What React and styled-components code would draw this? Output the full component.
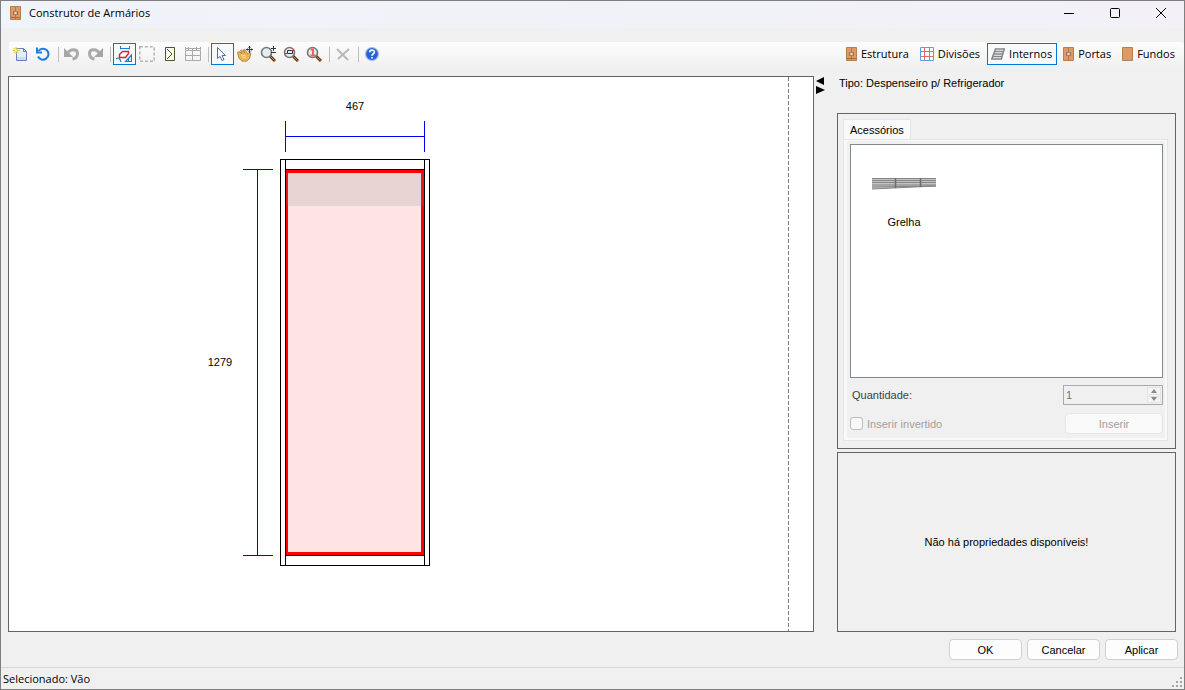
import React, { useState } from "react";
import styled, { createGlobalStyle } from "styled-components";

const GlobalStyle = createGlobalStyle`
* {
    box-sizing: border-box;
}
body {
    margin: 0;
    background: #f0f0f0;
    color: #000;
    font-family: "Liberation Sans", Arial, sans-serif;
    font-size: 11px;
}
button, input {
    font: inherit;
    color: inherit;
    margin: 0;
    padding: 0;
}
svg {
    display: block;
    flex-shrink: 0;
}
`;

const Window = styled.div`
min-height: 100vh;
display: flex;
flex-direction: column;
background: #f0f0f0;
border: 1px solid #7f7f7f;
`

const TitleBar = styled.header`
height: 27px;
display: flex;
align-items: center;
padding: 0 0 4px 9px;
background: linear-gradient(90deg, #eff4f9, #f3f0f8);
h1 {
    flex: 1;
    margin: 0 0 0 8px;
    font: 400 11px/16px "Open Sans", "Noto Sans", sans-serif;
}
`

const CaptionButton = styled.button`
width: 46px;
height: 22px;
display: flex;
align-items: center;
justify-content: center;
border: 0;
background: none;
`

const ToolStrip = styled.div`
height: 24px;
margin: 14px 0 0 8px;
display: flex;
align-items: center;
justify-content: space-between;
background: linear-gradient(#fdfdfd, #f1f1f1);
border-radius: 0 3px 3px 0;
`

const Tools = styled.div`
display: flex;
align-items: center;
`

const ToolButton = styled.button`
width: 23px;
height: 22px;
display: flex;
align-items: center;
justify-content: center;
padding-right: 1px;
background: ${p => p.$active ? "#f7fafd" : "none"};
border: 1px solid ${p => p.$active ? "#0078d7" : "transparent"};
`

const Separator = styled.span`
width: 6px;
height: 15px;
display: flex;
justify-content: center;
&:before {
    content: '';
    width: 1px;
    background: #bdbdbd;
}
`

const Sections = styled.nav`
width: 342px;
display: flex;
gap: 2px;
`

const SectionButton = styled.button`
height: 22px;
display: flex;
align-items: center;
gap: 4px;
padding: 0 4px 0 3px;
white-space: nowrap;
font: 400 11px/16px "Open Sans", "Noto Sans", sans-serif;
background: ${p => p.$active ? "#f7fafd" : "none"};
border: 1px solid ${p => p.$active ? "#0078d7" : "transparent"};
`

const Body = styled.main`
flex: 1;
display: flex;
padding: 10px 8px 0 7px;
`

const Canvas = styled.div`
flex: 1;
min-width: 440px;
display: flex;
justify-content: space-between;
background: #fff;
border: 1px solid #646464;
text {
    font-size: 11px;
    text-anchor: middle;
}
`

const PageLimit = styled.div`
width: 25px;
background: repeating-linear-gradient(#808080 0 4px, #fff 4px 6px) left / 1px 100% no-repeat;
`

const Splitter = styled.div`
width: 23px;
padding: 1px 0 0 2px;
`

const Side = styled.aside`
width: 339px;
display: flex;
flex-direction: column;
`

const TypeLabel = styled.p`
margin: 0 0 23px;
padding-left: 2px;
line-height: 14px;
`

const Panel = styled.section`
padding: 5px 7px 7px 5px;
border: 1px solid #646464;
`

const Tab = styled.button`
height: 20px;
display: block;
padding: 0 6px;
background: #f9f9f9;
border: 1px solid #e5e5e5;
border-bottom: 0;
`

const TabPage = styled.div`
padding: 1px;
border: 1px solid #e5e5e5;
background: #f9f9f9;
`

const Form = styled.div`
display: flex;
flex-direction: column;
padding: 3px 2px 4px 3px;
margin: 0 1px 1px 2px;
background: #f0f0f0;
`

const AccessoryList = styled.ul`
height: 234px;
margin: 0;
padding: 32px 21px;
list-style: none;
background: #fff;
border: 1px solid #828790;
`

const Accessory = styled.li`
width: 64px;
display: flex;
flex-direction: column;
align-items: center;
gap: 24px;
line-height: 14px;
`

const Field = styled.div`
display: flex;
align-items: center;
justify-content: space-between;
margin-top: ${p => p.$gap}px;
padding-left: ${p => p.$indent || 0}px;
color: ${p => p.$muted ? "#a0a0a0" : "#404040"};
`

const Spinner = styled.span`
width: 100px;
height: 20px;
display: flex;
padding: 1px;
border: 1px solid #a9a9ad;
color: #7c6d80;
input {
    flex: 1;
    min-width: 0;
    border: 0;
    padding-left: 1px;
    background: none;
    color: inherit;
    appearance: textfield;
}
input::-webkit-inner-spin-button {
    display: none;
}
`

const Steps = styled.span`
width: 14px;
display: flex;
flex-direction: column;
gap: 1px;
button {
    flex: 1;
    display: flex;
    align-items: center;
    justify-content: center;
    border: 1px solid #e3e3e3;
    background: #f4f4f4;
}
`

const CheckLabel = styled.label`
display: flex;
align-items: center;
gap: 4px;
line-height: 14px;
input {
    width: 13px;
    height: 13px;
    appearance: none;
    background: #f8f8f8;
    border: 1px solid #bcbcbc;
    border-radius: 3px;
}
`

const Button = styled.button`
width: ${p => p.$wide ? 98 : 73}px;
height: 21px;
background: #fdfdfd;
border: 1px solid #d0d0d0;
border-radius: 4px;
&:disabled {
    color: #a0a0a0;
    background: #f9f9f9;
    border-color: #e6e6e6;
}
`

const Properties = styled.section`
flex: 1;
min-height: 100px;
margin-top: 3px;
display: flex;
align-items: center;
justify-content: center;
border: 1px solid #646464;
`

const Actions = styled.div`
display: flex;
justify-content: flex-end;
gap: 5px;
padding: 7px 6px;
`

const StatusBar = styled.footer`
height: 22px;
display: flex;
align-items: center;
justify-content: space-between;
padding-left: 2px;
border-top: 1px solid #d7d7d7;
font: 400 11px/16px "Open Sans", "Noto Sans", sans-serif;
`

const Grip = styled.svg`
align-self: flex-end;
`

const Icon = ({ children, w = 16 }) => (
    <svg width={w} height="16" viewBox={`0 0 ${w} 16`} fill="none" aria-hidden="true">{children}</svg>
);

const Cabinet = ({ doorsOnly }) => (
    <Icon w={11}>
        <path d="M.5 1.5h10v13H.5z" fill="#dc9a68" stroke="#b87f4d" />
        <path d="M5.5 2v12" stroke="#b87840" />
        <path d="M3 6h1.500v4H3zM6.500 6H8v4H6.500z" fill="#8a7467" />
        <path d="M4.500 7h2v2h-2z" fill="#f2ddcb" />
        {!doorsOnly && <path d="M1 12.5h9" stroke="#a86b38" />}
    </Icon>
);

const Divisions = () => (
    <Icon w={14}>
        <path d="M.5 1.5h13v13H.5z" fill="#fff" />
        <path d="M4.5 1v14M9.5 1v14M0 5.5h14M0 10.5h14" stroke="#e06a6a" />
        <path d="M.5 1.5h13v13H.5z" stroke="#5ba0dc" />
    </Icon>
);

const Shelves = () => (
    <Icon w={14}>
        <path d="M4.5 3H13.300l-3 10H.8zM3.700 5.500h9M2.900 8h9M1.900 10.500h9" stroke="#858585" strokeWidth="1.5" />
    </Icon>
);

const Back = () => (
    <Icon w={11}><path d="M.5 1.5h10v13H.5z" fill="#dc9a68" stroke="#b87f4d" /></Icon>
);

const NewFile = () => (
    <Icon>
        <path d="M4.5 2.5h7l3 3v9h-10z" fill="#e3eeff" stroke="#6683bd" />
        <path d="M5 11h9v3H5z" fill="#cadcfb" />
        <path d="M11.5 2.5v3h3z" fill="#fff" stroke="#6683bd" />
        <path d="M4 1v7M.5 4.5h7M1.5 2l5 5M6.5 2l-5 5" stroke="#eec935" />
        <path d="M3 3.500h2v2H3z" fill="#fff6b0" />
    </Icon>
);

const Reset = () => (
    <Icon>
        <path d="M3.500 5A5.500 5.500 0 1 1 3 10.500" stroke="#1780df" strokeWidth="2" />
        <path d="M2 1.500v5h5" stroke="#1780df" strokeWidth="2" />
    </Icon>
);

const Curve = ({ flip }) => (
    <Icon>
        <g transform={flip ? "translate(16 0) scale(-1 1)" : undefined}>
            <path d="M3.500 7.500C6 2.500 13.500 2.500 13.500 7.500c0 3-2 5-5 5.500" stroke="#aaa" strokeWidth="3" />
            <path d="M0 2v9h9z" fill="#a6a6a6" />
        </g>
    </Icon>
);

const Dimensions = () => (
    <Icon>
        <path d="M4.5 0v3.500M13.5 0v3.500M4.5 2.500h9" stroke="#1780d8" />
        <path d="M3.500 10.500v-2l3-3h6v2l-3 4h-6z" stroke="#e01f30" strokeWidth="1.400" />
        <path d="M0 13c2-2 4-1 5 3M9.500 15.500h6V9zM12.500 15.500v-3" stroke="#1780c0" strokeWidth="1.200" />
    </Icon>
);

const Marquee = () => (
    <Icon><path d="M.8.8h14.400v14.400H.8z" stroke="#b4b4b4" strokeWidth="1.500" strokeDasharray="3 2" /></Icon>
);

const DoorSide = () => (
    <Icon w={10}>
        <path d="M.5 1.5h9v13h-9z" stroke="#4b5525" fill="#f8f9ef" />
        <path d="M2 3l5 5-5 5" stroke="#4b5525" />
    </Icon>
);

const Table = () => (
    <Icon>
        <path d="M.5 4.5h15v10H.5zM0 9.5h16M7.5 2v13M0 2.5h16M.5 1v3M3.5 1v3M11.5 1v3M15.5 1v3" stroke="#aaa" />
    </Icon>
);

const Arrow = () => (
    <Icon>
        <path d="M3.5 1.500v11L6 10.300l2 4.200 2-1-2-4h3.500z" fill="#fff" stroke="#596c9a" />
    </Icon>
);

const Hand = () => (
    <Icon>
        <path d="M.5 6.500l1.500-1 3 2-1.500-3 1-.8 3 3-1-3 1.300-.5 3.200 5 1.500-1.500 1.500.5-1.500 5.500-3 2.500H5l-3-3z" fill="#e7b457" stroke="#a8762e" strokeWidth=".8" />
        <path d="M4 9l5 1M5 11l4 1" stroke="#ffe0a0" />
        <path d="M12.5 0v7M9 3.5h7M11.5 1.5h2M11.5 5.5h2M10.5 2.5v2M14.5 2.5v2" stroke="#35383c" />
    </Icon>
);

const Lens = ({ children }) => (
    <Icon>
        <path d="M10 10l5 5" stroke="#623b19" strokeWidth="3" />
        <path d="M10.500 10.500l4 4" stroke="#b98b51" />
        <circle cx="6.500" cy="6.500" r="5" fill="#e5edf3" stroke="#777" strokeWidth="1.600" />
        {children}
    </Icon>
);

const Delete = () => (
    <Icon><path d="M2 3l11 11M14 3L3 13" stroke="#b8b8b8" strokeWidth="2" /></Icon>
);

const Help = () => (
    <Icon>
        <circle cx="8" cy="8" r="6.500" fill="#2763d5" stroke="#aabfe6" strokeWidth="1.200" />
        <path d="M5.800 6.300c0-3 4.600-2.800 4.600-.3C10.400 7.800 8 7.700 8 9.800M8 11v1.500" stroke="#fff" strokeWidth="1.700" />
    </Icon>
);

const tools = [
    { name: "Novo", icon: <NewFile /> },
    { name: "Reiniciar", icon: <Reset /> },
    null,
    { name: "Desfazer", icon: <Curve /> },
    { name: "Refazer", icon: <Curve flip /> },
    null,
    { name: "Cotas", icon: <Dimensions />, active: true },
    { name: "Área", icon: <Marquee /> },
    { name: "Porta", icon: <DoorSide /> },
    { name: "Tabela", icon: <Table /> },
    null,
    { name: "Selecionar", icon: <Arrow />, active: true },
    { name: "Mover", icon: <Hand /> },
    { name: "Zoom", icon: <Lens><path d="M13.5 0v5M11 2.5h5M11 6.5h5" stroke="#333" /></Lens> },
    { name: "Zoom janela", icon: <Lens><path d="M4.5 4.5h5v3h-5z" stroke="#333" /><path d="M2 7.5h3M8 4.5h3" stroke="#e22" /></Lens> },
    { name: "Zoom real", icon: <Lens><path d="M4.500 3.500H7V10M4.500 9.500h5" stroke="#f36060" strokeWidth="2" /></Lens> },
    null,
    { name: "Excluir", icon: <Delete /> },
    null,
    { name: "Ajuda", icon: <Help /> },
];

const sections = [
    { name: "Estrutura", icon: <Cabinet /> },
    { name: "Divisões", icon: <Divisions /> },
    { name: "Internos", icon: <Shelves /> },
    { name: "Portas", icon: <Cabinet doorsOnly /> },
    { name: "Fundos", icon: <Back /> },
];

const Drawing = () => (
    <svg width="440" height="500" shapeRendering="crispEdges" fill="none">
        <text x="346" y="33" fill="#000">467</text>
        <text x="211" y="289" fill="#000">1279</text>
        <path d="M276.5 44v31M415.5 44v31M276.5 59.5h139M234 92.5h30M234 478.5h30M248.5 92.5v386" stroke="#0000f0" />
        <path d="M271.5 82.5h149v406h-149zM276.5 82.5v406M415.5 82.5v406M276.5 92.5h139M276.5 478.5h139" stroke="#000" />
        <path d="M277 93h138v385H277z" fill="#f00" />
        <path d="M279 96h133v379H279z" fill="#ffe4e4" />
        <path d="M277 96h138v33H277z" fill="#e01c22" />
        <path d="M279 96h133v33H279z" fill="#e8d4d2" />
    </svg>
);

const Grill = () => (
    <svg width="64" height="14" fill="none">
        <path d="M0 1h64v8L0 12z" fill="#c4c4c4" />
        <path d="M0 1.5h64M0 3.5h64M0 5.5h64M0 8h64M0 10l64-1M0 12l64-3" stroke="#858585" />
        <path d="M23.5 1v10M48.5 1v9" stroke="#6c6c6c" strokeWidth="1.500" />
    </svg>
);

const App = () => {
    const [section, setSection] = useState("Internos");

    return (
        <>
            <GlobalStyle />
            <Window>
                <TitleBar>
                    <Cabinet />
                    <h1>Construtor de Armários</h1>
                    <CaptionButton aria-label="Minimizar">
                        <svg width="10" height="10"><path d="M0 5.5h10" stroke="#000" /></svg>
                    </CaptionButton>
                    <CaptionButton aria-label="Maximizar">
                        <svg width="10" height="10"><rect x=".5" y=".5" width="9" height="9" rx="1" fill="none" stroke="#000" /></svg>
                    </CaptionButton>
                    <CaptionButton aria-label="Fechar">
                        <svg width="10" height="10"><path d="M0 0l10 10M10 0L0 10" stroke="#000" /></svg>
                    </CaptionButton>
                </TitleBar>
                <ToolStrip>
                    <Tools>
                        {tools.map((tool, i) => tool
                            ? <ToolButton key={i} aria-label={tool.name} $active={tool.active}>{tool.icon}</ToolButton>
                            : <Separator key={i} />
                        )}
                    </Tools>
                    <Sections>
                        {sections.map(({ name, icon }) => (
                            <SectionButton key={name} $active={name === section} onClick={() => setSection(name)}>
                                {icon}{name}
                            </SectionButton>
                        ))}
                    </Sections>
                </ToolStrip>
                <Body>
                    <Canvas>
                        <Drawing />
                        <PageLimit />
                    </Canvas>
                    <Splitter>
                        <svg width="9" height="18"><path d="M8 0v8L0 4zM0 9v8l9-4z" fill="#000" /></svg>
                    </Splitter>
                    <Side>
                        <TypeLabel>Tipo: Despenseiro p/ Refrigerador</TypeLabel>
                        <Panel>
                            <Tab>Acessórios</Tab>
                            <TabPage>
                                <Form>
                                    <AccessoryList>
                                        <Accessory><Grill />Grelha</Accessory>
                                    </AccessoryList>
                                    <Field $gap={7} $indent={2}>
                                        <label htmlFor="quantity">Quantidade:</label>
                                        <Spinner>
                                            <input id="quantity" type="number" defaultValue="1" disabled />
                                            <Steps>
                                                <button disabled aria-label="Aumentar"><svg width="6" height="4"><path d="M0 4l3-4 3 4z" fill="#888" /></svg></button>
                                                <button disabled aria-label="Diminuir"><svg width="6" height="4"><path d="M0 0l3 4 3-4z" fill="#888" /></svg></button>
                                            </Steps>
                                        </Spinner>
                                    </Field>
                                    <Field $gap={8} $muted>
                                        <CheckLabel><input type="checkbox" disabled />Inserir invertido</CheckLabel>
                                        <Button $wide disabled>Inserir</Button>
                                    </Field>
                                </Form>
                            </TabPage>
                        </Panel>
                        <Properties>Não há propriedades disponíveis!</Properties>
                    </Side>
                </Body>
                <Actions>
                    <Button>OK</Button>
                    <Button>Cancelar</Button>
                    <Button>Aplicar</Button>
                </Actions>
                <StatusBar>
                    Selecionado: Vão
                    <Grip width="13" height="13"><path d="M9 1h2v2H9zM5 5h2v2H5zM9 5h2v2H9zM1 9h2v2H1zM5 9h2v2H5zM9 9h2v2H9z" fill="#a5a5a5" /></Grip>
                </StatusBar>
            </Window>
        </>
    );
};

export default App;
